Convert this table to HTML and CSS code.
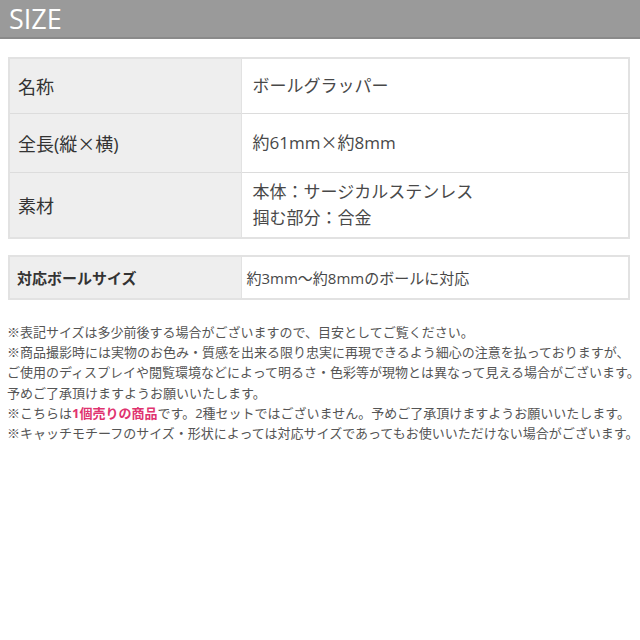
FILE: index.html
```html
<!DOCTYPE html>
<html>
    <head>
        <meta charset="utf-8">
        <title>SIZE</title>
        <link rel="stylesheet" href="styles.css">
    </head>
    <body>
        <h2 class="title">SIZE</h2>

        <table class="spec">
            <tr class="r1">
                <th>名称</th>
                <td>ボールグラッパー</td>
            </tr>
            <tr class="r2">
                <th>全長(縦<span class="x">×</span>横)</th>
                <td>約61mm<span class="x">×</span>約8mm</td>
            </tr>
            <tr class="r3">
                <th>素材</th>
                <td>本体：サージカルステンレス<br>掴む部分：合金</td>
            </tr>
        </table>

        <table class="spec spec-sub">
            <tr>
                <th>対応ボールサイズ</th>
                <td>約3mm〜約8mmのボールに対応</td>
            </tr>
        </table>

        <ul class="notes">
            <li>※表記サイズは多少前後する場合がございますので、目安としてご覧ください。</li>
            <li>※商品撮影時には実物のお色み・質感を出来る限り忠実に再現できるよう細心の注意を払っておりますが、</li>
            <li>ご使用のディスプレイや閲覧環境などによって明るさ・色彩等が現物とは異なって見える場合がございます。</li>
            <li>予めご了承頂けますようお願いいたします。</li>
            <li>※こちらは<em>1個売りの商品</em>です。2種セットではございません。予めご了承頂けますようお願いいたします。</li>
            <li>※キャッチモチーフのサイズ・形状によっては対応サイズであってもお使いいただけない場合がございます。</li>
        </ul>
    </body>
</html>
```

FILE: styles.css
```css
*{
    margin: 0;
    padding: 0;
    list-style: none;
}
body{
    background: #fff;
    font-family: "Open Sans", "Noto Sans CJK JP", sans-serif;
    color: #444;
    overflow: hidden;
}
.title{
    height: 37px;
    line-height: 37px;
    background: #9a9a9a;
    border-bottom: 2px solid #8a8a8a;
    color: #fff;
    font-size: 27px;
    font-weight: 400;
    padding-left: 9px;
}

/* 表格 */
.spec{
    width: 622px;
    margin: 18px 0 0 8px;
    border-collapse: collapse;
    table-layout: fixed;
    border: 2px solid #e2e2e2;
}
.spec th,
.spec td{
    border-top: 1px solid #dcdcdc;
    text-align: left;
    vertical-align: middle;
    font-weight: 400;
}
.spec th{
    box-sizing: border-box;
    width: 232px;
    background: #eeeeee;
    color: #333;
    font-size: 18px;
    padding-left: 8px;
    border-right: 1px solid #e2e2e2;
}
.spec td{
    font-size: 17px;
    line-height: 26px;
    padding-left: 11px;
    color: #484848;
}
/* 全角的× */
.spec .x{
    font-family: "Noto Sans CJK JP", sans-serif;
}
.spec .r1{
    height: 55px;
}
.spec .r2{
    height: 59px;
}
.spec .r3{
    height: 66px;
}

.spec-sub{
    margin-top: 16px;
}
.spec-sub tr{
    height: 43px;
}
.spec-sub th{
    font-size: 15px;
    font-weight: 600;
    padding-left: 7px;
}
.spec-sub td{
    font-size: 15px;
    padding-left: 5px;
}

/* 注意事项 */
.notes{
    margin: 22px 0 0 7px;
    font-size: 13px;
    line-height: 20.2px;
    color: #555;
    white-space: nowrap;
}
.notes em{
    font-style: normal;
    font-weight: 700;
    color: #e0336f;
}
```
